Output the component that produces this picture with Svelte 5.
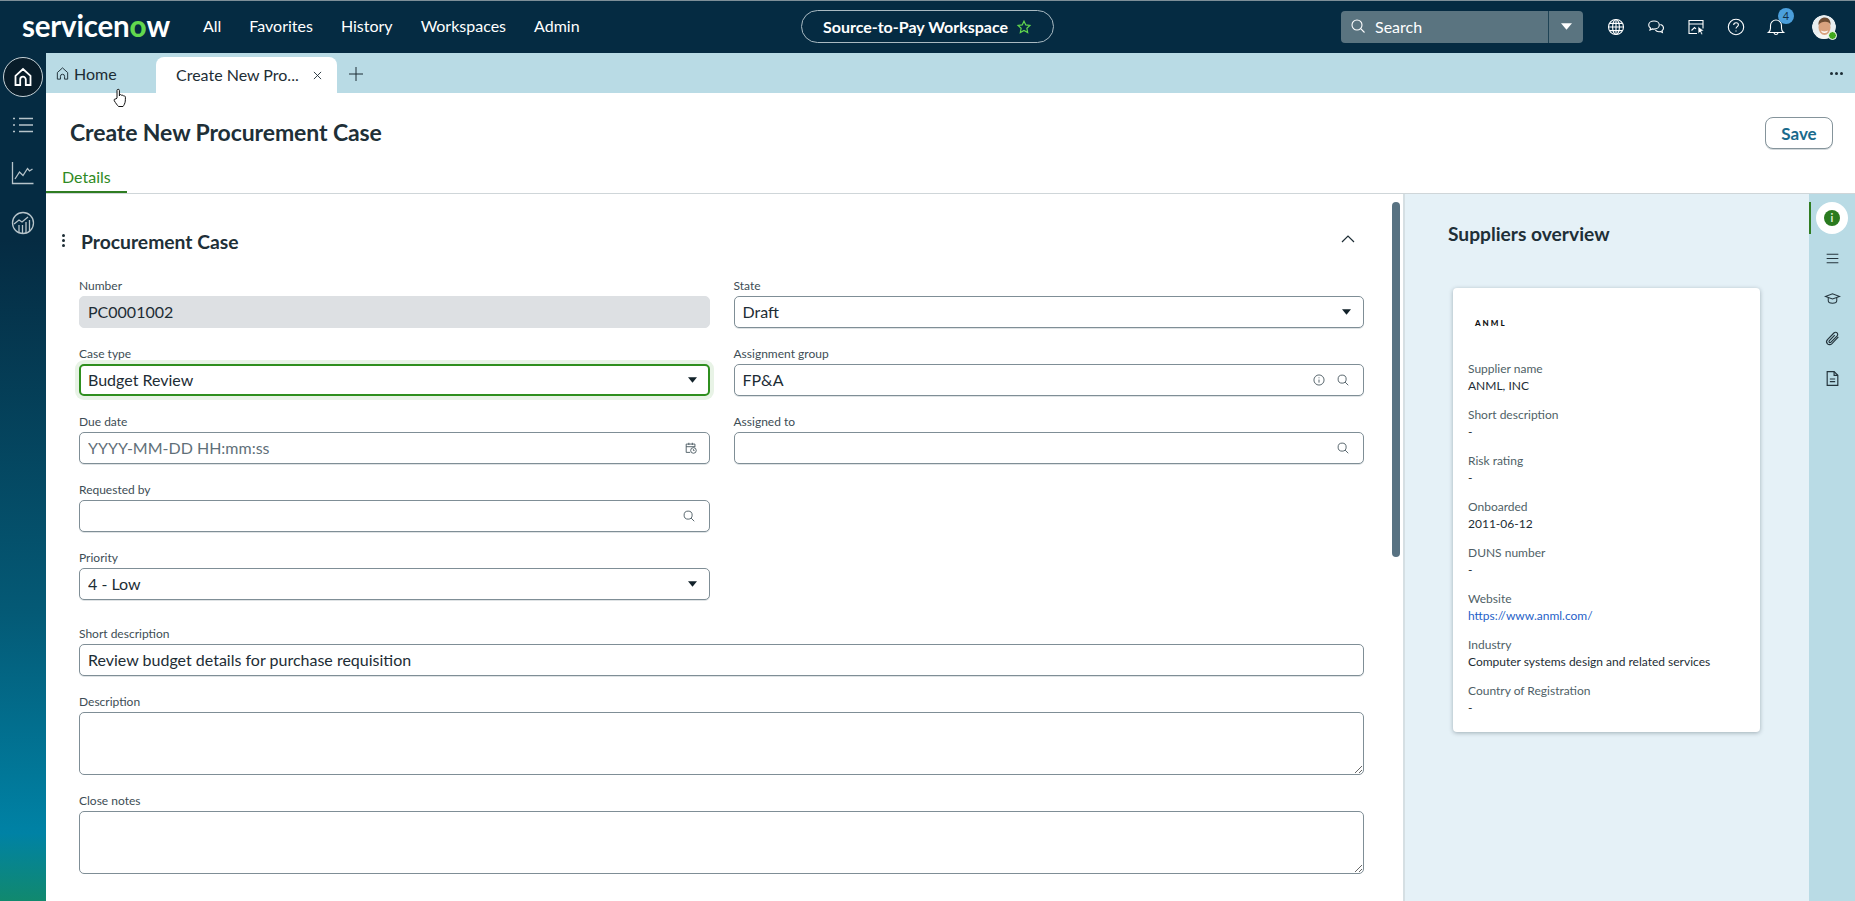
<script>
	const nav = ["All", "Favorites", "History", "Workspaces", "Admin"];
	const supplier = [
		{ label: "Supplier name", value: "ANML, INC" },
		{ label: "Short description", value: "-" },
		{ label: "Risk rating", value: "-" },
		{ label: "Onboarded", value: "2011-06-12" },
		{ label: "DUNS number", value: "-" },
		{ label: "Website", value: "https://www.anml.com/", link: true },
		{ label: "Industry", value: "Computer systems design and related services" },
		{ label: "Country of Registration", value: "-" }
	];
</script>

{#snippet caret()}
	<svg class="caret" viewBox="0 0 10 6"><path d="M0 0h10L5 6z" /></svg>
{/snippet}

{#snippet lens()}
	<svg class="ficon" viewBox="0 0 16 16"><circle cx="7" cy="7" r="4.6" /><path d="M10.4 10.4 14 14" /></svg>
{/snippet}

<div class="app">
	<header class="top">
		<div class="top-left">
			<div class="logo">servicen<span>o</span>w</div>
			<nav class="nav">
				{#each nav as item}
					<span>{item}</span>
				{/each}
			</nav>
		</div>
		<div class="pill">
			Source-to-Pay Workspace
			<svg viewBox="0 0 24 24"><path d="M12 3.2l2.7 5.7 6.2.8-4.6 4.3 1.2 6.2-5.5-3.1-5.5 3.1 1.2-6.2-4.6-4.3 6.2-.8z" /></svg>
		</div>
		<div class="top-right">
			<div class="search">
				<div class="search-field">
					<svg viewBox="0 0 16 16"><circle cx="7" cy="7" r="5" /><path d="M10.7 10.7 14.5 14.5" /></svg>
					Search
				</div>
				<div class="search-drop"><svg viewBox="0 0 10 6"><path d="M0 0h10L5 6z" /></svg></div>
			</div>
			<div class="tools">
				<button aria-label="Language">
					<svg viewBox="0 0 20 20"><circle cx="10" cy="10" r="7.5" /><ellipse cx="10" cy="10" rx="3.4" ry="7.5" /><path d="M2.5 10h15M3.5 6.4h13M3.5 13.6h13M10 2.5v15" /></svg>
				</button>
				<button aria-label="Chat">
					<svg viewBox="0 0 20 20"><path d="M8 4c-3 0-5.300 1.700-5.300 4 0 1.300.7 2.300 1.800 3l-.5 2 2.300-1.100c.5.100 1.100.2 1.700.2 3 0 5.300-1.800 5.300-4.100S11 4 8 4z" /><path d="M14.300 7.500c1.900.5 3.200 1.900 3.200 3.500 0 1.100-.6 2.100-1.500 2.700l.4 1.800-2-1c-1.800.4-4-.1-5-1.300" /></svg>
				</button>
				<button aria-label="Workspace">
					<svg viewBox="0 0 20 20"><path d="M11 16.500H3V3.500h14v8" /><path d="M3 7h14M5.500 13.500l3-3 1.500 1.300" /><path class="solid" d="M12 9.500l6 4.300-2.600.5 1.400 2.800-1.300.7-1.400-2.800-2 1.700z" /></svg>
				</button>
				<button aria-label="Help">
					<svg viewBox="0 0 20 20"><circle cx="10" cy="10" r="7.700" /><path d="M7.700 8c0-1.400 1-2.300 2.400-2.300 1.300 0 2.300.9 2.300 2 0 1.900-2.400 1.900-2.400 3.900" /><path d="M10 13.600v1" /></svg>
				</button>
				<button class="bell" aria-label="Notifications">
					<svg viewBox="0 0 20 20"><path d="M2.500 15.500c1.500-1 2-2 2-4.500V8.500C4.500 5.400 7 3 10 3s5.500 2.400 5.500 5.500V11c0 2.500.5 3.500 2 4.500z" /><path d="M8 15.800c.2 1 1 1.700 2 1.700s1.800-.7 2-1.700" /></svg>
					<span class="badge">4</span>
				</button>
			</div>
			<div class="avatar">
				<svg viewBox="0 0 24 24">
					<circle cx="12" cy="12" r="12" fill="#e9eef0" />
					<path d="M3 24c.5-5 4-6.500 9-6.500s8.500 1.500 9 6.500z" fill="#f4f5f4" />
					<ellipse cx="12.500" cy="12.500" rx="6" ry="7.500" fill="#d9a27f" />
					<path d="M6.500 10c-.5-5 3-7.500 6.500-7.500s6 3 5.500 7.500c-1-2.500-3-3.500-5.800-3.200C10.500 7 8 7.500 6.500 10z" fill="#6d4c33" />
					<path d="M9 15.500c1.700 1.200 5 1.200 7 0-.3 1.700-1.700 2.500-3.500 2.500s-3.200-.8-3.500-2.500z" fill="#fff" />
				</svg>
				<span class="presence"></span>
			</div>
		</div>
	</header>

	<div class="body">
		<aside class="rail">
			<div class="rail-home">
				<svg viewBox="0 0 24 24"><path d="M4.500 20V10.800L12 4l7.500 6.800V20h-4.700v-5.500a2.800 2.800 0 0 0-5.600 0V20z" /></svg>
			</div>
			<div class="rail-icon">
				<svg viewBox="0 0 24 24"><path d="M8 5.500h14M8 12h14M8 18.500h14M2 5.500h2M2 12h2M2 18.500h2" /></svg>
			</div>
			<div class="rail-icon">
				<svg viewBox="0 0 24 24"><path d="M1.500 1v21.500h21" /><path d="M4 18l4.500-7 3.500 3.500 4.500-7 2 2.500 3-2" /></svg>
			</div>
			<div class="rail-icon">
				<svg viewBox="0 0 24 24"><circle cx="12" cy="12" r="10.500" /><path d="M3 13l5-4 3 2 6-5" /><path d="M8 22v-8M11.500 23v-9M15 22.500V11M18.500 20.500V9" /></svg>
			</div>
		</aside>

		<main class="main">
			<div class="tabbar">
				<div class="tab-home">
					<svg viewBox="0 0 16 16"><path d="M2.500 14V7l5.500-5 5.500 5v7h-3.300v-3a2.200 2.200 0 0 0-4.400 0v3z" /></svg>
					Home
				</div>
				<div class="tab-active">
					<span>Create New Pro...</span>
					<svg viewBox="0 0 10 10"><path d="M1 1l8 8M9 1l-8 8" /></svg>
				</div>
				<div class="tab-add">
					<svg viewBox="0 0 14 14"><path d="M7 0v14M0 7h14" /></svg>
				</div>
				<div class="tab-more"><i></i><i></i><i></i></div>
			</div>

			<div class="page-head">
				<div class="title-row">
					<h1>Create New Procurement Case</h1>
					<button class="save">Save</button>
				</div>
				<div class="page-tab">Details</div>
			</div>

			<div class="content">
				<section class="form">
					<div class="section-head">
						<div class="handle"><i></i><i></i><i></i></div>
						<h2>Procurement Case</h2>
						<svg class="chevron" viewBox="0 0 14 8"><path d="M1 7l6-6 6 6" /></svg>
					</div>

					<div class="grid">
						<div class="field">
							<label for="f-number">Number</label>
							<div class="box readonly"><input id="f-number" value="PC0001002" readonly /></div>
						</div>
						<div class="field">
							<label for="f-state">State</label>
							<div class="box"><input id="f-state" value="Draft" readonly />{@render caret()}</div>
						</div>
						<div class="field">
							<label for="f-type">Case type</label>
							<div class="box focused"><input id="f-type" value="Budget Review" readonly />{@render caret()}</div>
						</div>
						<div class="field">
							<label for="f-group">Assignment group</label>
							<div class="box">
								<input id="f-group" value="FP&A" readonly />
								<svg class="ficon info" viewBox="0 0 16 16"><circle cx="8" cy="8" r="5.800" /><path d="M8 7.500V11M8 5v1" /></svg>
								{@render lens()}
							</div>
						</div>
						<div class="field">
							<label for="f-due">Due date</label>
							<div class="box">
								<input id="f-due" placeholder="YYYY-MM-DD HH:mm:ss" readonly />
								<svg class="ficon cal" viewBox="0 0 16 16"><path d="M7 13H2.500V3.500h10V7M2.500 6.500h10M5.500 2v2.500M9.500 2v2.500" /><circle cx="10.800" cy="10.800" r="3.200" /><path d="M10.800 9.300v1.600h1.200" /></svg>
							</div>
						</div>
						<div class="field">
							<label for="f-assigned">Assigned to</label>
							<div class="box"><input id="f-assigned" readonly />{@render lens()}</div>
						</div>
						<div class="field">
							<label for="f-req">Requested by</label>
							<div class="box"><input id="f-req" readonly />{@render lens()}</div>
						</div>
						<div class="spacer"></div>
						<div class="field">
							<label for="f-prio">Priority</label>
							<div class="box"><input id="f-prio" value="4 - Low" readonly />{@render caret()}</div>
						</div>
					</div>

					<div class="wide">
						<div class="field">
							<label for="f-short">Short description</label>
							<div class="box"><input id="f-short" value="Review budget details for purchase requisition" readonly /></div>
						</div>
						<div class="field">
							<label for="f-desc">Description</label>
							<textarea id="f-desc" readonly></textarea>
						</div>
						<div class="field">
							<label for="f-close">Close notes</label>
							<textarea id="f-close" readonly></textarea>
						</div>
					</div>
					<div class="scroll-thumb"></div>
				</section>

				<section class="panel">
					<h3>Suppliers overview</h3>
					<div class="card">
						<div class="card-logo">ANML</div>
						{#each supplier as row}
							<div class="row">
								<div class="row-label">{row.label}</div>
								{#if row.link}
									<a href="https://www.anml.com/">{row.value}</a>
								{:else}
									<div class="row-value">{row.value}</div>
								{/if}
							</div>
						{/each}
					</div>
				</section>

				<aside class="side">
					<div class="side-item active">
						<span class="side-circle"><span class="info-dot">i</span></span>
					</div>
					<div class="side-item">
						<svg viewBox="0 0 16 16"><path d="M2.500 4h11M2.500 8h11M2.500 12h11" /></svg>
					</div>
					<div class="side-item">
						<svg viewBox="0 0 18 16"><path d="M1.500 5.800 9 3l7.500 2.800L9 8.600z" /><path d="M4.500 7v3.500c0 1.500 2 2.500 4.500 2.500s4.500-1 4.500-2.500V7" /></svg>
					</div>
					<div class="side-item">
						<svg viewBox="0 0 16 16"><path d="M13.500 6.500l-6 6.300c-1.300 1.300-3.100 1.300-4.200.2s-1.100-2.900.2-4.200l5.800-6c.9-.9 2.200-.9 3-.1s.8 2.100-.1 3l-5.600 5.800c-.5.500-1.200.5-1.600.1s-.4-1.100.1-1.600l5-5.200" /></svg>
					</div>
					<div class="side-item">
						<svg viewBox="0 0 16 16"><path d="M3 1.500h6.500L13 5v9.500H3z" /><path d="M9.500 1.500V5H13M5.500 8.500h5M5.500 11h5" /></svg>
					</div>
				</aside>
			</div>
		</main>
	</div>

	<svg class="hand" viewBox="0 0 16 20"><path d="M5 10V2.500a1.200 1.200 0 0 1 2.400 0V8l.3-1.200c.8-.5 1.800-.2 2 .6.800-.4 1.600-.1 1.900.6.900-.3 1.800.2 1.800 1.200 0 3 0 5-1 7-.5 1-1 1.800-1.400 2.300H6.500C5.500 17.500 3.600 15 2.300 12.800c-.7-1.200.7-2.500 1.700-1.700z" /></svg>
</div>

<style>
	:global(body) {
		margin: 0;
	}
	.app {
		position: relative;
		width: 100%;
		height: 100vh;
		overflow: hidden;
		display: flex;
		flex-direction: column;
		font-family: Lato, "Open Sans", sans-serif;
		color: #1d2d35;
		background: #fff;
	}
	h1, h2, h3 {
		margin: 0;
	}
	svg {
		display: block;
		flex: none;
		fill: none;
		stroke: currentColor;
	}
	button {
		font-family: inherit;
	}

	/* top bar */
	.top {
		box-sizing: border-box;
		height: 53px;
		flex: none;
		display: grid;
		grid-template-columns: 1fr auto 1fr;
		align-items: center;
		background: #052b42;
		border-top: 1px solid #7e8f98;
		color: #fff;
	}
	.top-left {
		display: flex;
		align-items: center;
		padding-left: 22px;
	}
	.logo {
		width: 148px;
		font-size: 29.500px;
		font-weight: 700;
		letter-spacing: -0.2px;
		line-height: 34px;
		margin-top: -3px;
		white-space: nowrap;
	}
	.logo span {
		color: #62d84e;
		font-weight: 900;
	}
	.nav {
		display: flex;
		gap: 28px;
		margin: -3px 0 0 33px;
		font-size: 16px;
	}
	.pill {
		box-sizing: border-box;
		width: 253px;
		height: 33px;
		display: flex;
		align-items: center;
		justify-content: center;
		gap: 8px;
		border: 1px solid #a9bac2;
		border-radius: 17px;
		font-size: 16px;
		font-weight: 700;
		margin-top: -1px;
	}
	.pill svg {
		width: 16px;
		height: 16px;
		stroke: #62d84e;
		stroke-width: 1.800;
	}
	.top-right {
		display: flex;
		align-items: center;
		justify-content: flex-end;
		padding-right: 19px;
	}
	.search {
		display: flex;
		width: 242px;
		height: 32px;
		border-radius: 4px;
		overflow: hidden;
		background: #5a7480;
		margin-top: -1px;
	}
	.search-field {
		flex: 1;
		display: flex;
		align-items: center;
		gap: 9px;
		padding-left: 9px;
		padding-bottom: 1px;
		font-size: 16px;
		border-right: 1px solid #1e4355;
	}
	.search-field svg {
		width: 16px;
		height: 16px;
		stroke-width: 1.100;
	}
	.search-drop {
		width: 34px;
		display: flex;
		align-items: center;
		justify-content: center;
	}
	.search-drop svg {
		width: 11px;
		height: 7px;
		fill: #fff;
		stroke: none;
	}
	.tools {
		display: flex;
		margin-left: 13px;
	}
	.tools button {
		position: relative;
		width: 40px;
		height: 40px;
		padding: 0;
		display: flex;
		align-items: center;
		justify-content: center;
		background: none;
		border: 0;
		color: #fff;
	}
	.tools svg {
		width: 20px;
		height: 20px;
		stroke-width: 1.100;
	}
	.tools .solid {
		fill: #fff;
		stroke: #052b42;
		stroke-width: 0.600;
	}
	.badge {
		position: absolute;
		top: 1px;
		left: 22px;
		width: 16px;
		height: 16px;
		border-radius: 50%;
		background: #4b9fdc;
		color: #123047;
		font-size: 11px;
		line-height: 16px;
		text-align: center;
	}
	.avatar {
		position: relative;
		width: 24px;
		height: 24px;
		margin-left: 16px;
	}
	.avatar svg {
		width: 24px;
		height: 24px;
		border-radius: 50%;
		stroke: none;
	}
	.presence {
		position: absolute;
		right: -1px;
		bottom: -1px;
		width: 7px;
		height: 7px;
		border: 1px solid #fff;
		border-radius: 50%;
		background: #41a81d;
	}

	/* left rail */
	.body {
		flex: 1;
		min-height: 0;
		display: flex;
	}
	.rail {
		box-sizing: border-box;
		width: 46px;
		flex: none;
		display: flex;
		flex-direction: column;
		align-items: center;
		padding-top: 4px;
		color: #b7c4ca;
		background: linear-gradient(180deg, #052b42 0%, #052b42 22%, #045a76 66%, #0082a5 92%, #11896e 100%);
	}
	.rail-home {
		box-sizing: border-box;
		width: 40px;
		height: 40px;
		display: flex;
		align-items: center;
		justify-content: center;
		border: 1px solid #c6d2d7;
		border-radius: 50%;
		background: #081c29;
		color: #fff;
		margin-bottom: 16px;
	}
	.rail-home svg {
		width: 24px;
		height: 24px;
		stroke-width: 1.800;
	}
	.rail-icon {
		height: 24px;
		margin-bottom: 24px;
	}
	.rail-icon:last-child {
		margin-top: 2px;
	}
	.rail-icon svg {
		width: 24px;
		height: 24px;
		stroke-width: 1.300;
	}

	/* tabs */
	.main {
		flex: 1;
		min-width: 0;
		display: flex;
		flex-direction: column;
	}
	.tabbar {
		height: 40px;
		flex: none;
		display: flex;
		align-items: flex-end;
		background: #b9dbe5;
		font-size: 16px;
	}
	.tab-home {
		box-sizing: border-box;
		width: 110px;
		height: 40px;
		display: flex;
		align-items: center;
		gap: 4px;
		padding-left: 9px;
	}
	.tab-home svg {
		width: 15px;
		height: 15px;
		stroke-width: 1;
	}
	.tab-active {
		box-sizing: border-box;
		width: 181px;
		height: 36px;
		display: flex;
		align-items: center;
		justify-content: space-between;
		padding: 0 15px 2px 20px;
		background: #fff;
		border-radius: 8px 8px 0 0;
	}
	.tab-active svg {
		width: 9px;
		height: 9px;
		stroke-width: 1;
		margin-top: 2px;
	}
	.tab-add {
		height: 40px;
		display: flex;
		align-items: center;
		margin-left: 12px;
		padding-top: 1px;
		box-sizing: border-box;
	}
	.tab-add svg {
		width: 14px;
		height: 14px;
		stroke-width: 1;
	}
	.tab-more {
		height: 40px;
		display: flex;
		align-items: center;
		gap: 2px;
		margin-left: auto;
		padding-right: 12px;
	}
	.tab-more i {
		width: 3px;
		height: 3px;
		border-radius: 50%;
		background: #1d2d35;
	}

	/* page head */
	.page-head {
		box-sizing: border-box;
		height: 101px;
		flex: none;
		padding-top: 24px;
		border-bottom: 1px solid #cfd6d9;
	}
	.title-row {
		display: flex;
		align-items: center;
		justify-content: space-between;
		height: 32px;
		padding: 0 22px 0 24px;
	}
	h1 {
		font-size: 23px;
		font-weight: 700;
		letter-spacing: -0.1px;
		color: #202f37;
		margin-top: -2px;
	}
	.save {
		box-sizing: border-box;
		width: 68px;
		height: 32px;
		padding: 0;
		background: #fff;
		border: 1px solid #85949b;
		border-radius: 8px;
		box-shadow: 0 1px 0 #d3d9dc;
		color: #1a6a8c;
		font-size: 17px;
		font-weight: 700;
	}
	.page-tab {
		box-sizing: border-box;
		width: 81px;
		height: 33px;
		margin-top: 11px;
		padding-left: 16px;
		color: #2f8a24;
		font-size: 16px;
		line-height: 33px;
		border-bottom: 2px solid #2f7d22;
	}

	/* form */
	.content {
		flex: 1;
		min-height: 0;
		display: flex;
	}
	.form {
		position: relative;
		box-sizing: border-box;
		flex: 1;
		min-width: 0;
		padding: 33px 39px 0 33px;
	}
	.section-head {
		display: flex;
		align-items: center;
		height: 28px;
		margin: 0 0 23px -19px;
	}
	.handle {
		width: 21px;
		display: flex;
		flex-direction: column;
		gap: 2px;
		padding-left: 2px;
		box-sizing: border-box;
		margin-top: -1px;
	}
	.handle i {
		width: 3px;
		height: 3px;
		border-radius: 50%;
		background: #1d2d35;
	}
	h2 {
		font-size: 19.300px;
		font-weight: 700;
		color: #202f37;
	}
	.chevron {
		width: 14px;
		height: 8px;
		margin: -4px 9px 0 auto;
		stroke-width: 1.200;
	}
	.grid {
		display: grid;
		grid-template-columns: 1fr 1fr;
		column-gap: 24px;
		row-gap: 18px;
	}
	.field {
		display: flex;
		flex-direction: column;
		gap: 2px;
	}
	.field label {
		height: 16px;
		font-size: 12px;
		line-height: 16px;
		color: #3d4d55;
	}
	.box {
		box-sizing: border-box;
		height: 32px;
		display: flex;
		align-items: center;
		gap: 12px;
		padding: 0 11px 0 8px;
		border: 1px solid #7f8e96;
		border-radius: 5px;
		box-shadow: 0 1px 0 #dfe3e5;
		background: #fff;
	}
	.box input {
		flex: 1;
		min-width: 0;
		padding: 0;
		margin-top: -2px;
		border: 0;
		outline: 0;
		background: none;
		font: 16px Lato, "Open Sans", sans-serif;
		color: #1d2d35;
	}
	.box input::placeholder {
		color: #5f7079;
		opacity: 1;
	}
	.box.readonly {
		border-color: #dde0e3;
		background: #dde0e3;
		box-shadow: none;
	}
	.box.focused {
		border: 2px solid #2f8f1f;
		padding: 0 10px 0 7px;
		box-shadow: 0 0 0 4px #e8f3e6;
	}
	.caret {
		width: 9px;
		height: 6px;
		margin-right: 1px;
		fill: #12222a;
		stroke: none;
	}
	.ficon {
		width: 14px;
		height: 14px;
		stroke: #44545c;
		stroke-width: 1;
		margin-right: 2px;
	}
	.ficon.info {
		margin-right: -2px;
	}
	.ficon.cal {
		margin-right: 0;
	}
	.wide {
		display: flex;
		flex-direction: column;
		gap: 18px;
		margin-top: 26px;
	}
	textarea {
		box-sizing: border-box;
		display: block;
		width: 100%;
		height: 63px;
		padding: 6px 8px;
		border: 1px solid #7f8e96;
		border-radius: 5px;
		outline: 0;
		resize: vertical;
		background: #fff;
	}
	.scroll-thumb {
		position: absolute;
		top: 8px;
		right: 3px;
		width: 8px;
		height: 355px;
		border-radius: 4px;
		background: #587282;
	}

	/* suppliers panel */
	.panel {
		box-sizing: border-box;
		width: 406px;
		flex: none;
		padding: 28px 0 0 43px;
		border-left: 2px solid #d5dfe3;
		background: #e5f1f7;
	}
	h3 {
		font-size: 19.200px;
		line-height: 24px;
		font-weight: 700;
		color: #202f37;
	}
	.card {
		box-sizing: border-box;
		width: 307px;
		margin: 42px 0 0 5px;
		padding: 27px 15px 15px;
		background: #fff;
		border-radius: 4px;
		box-shadow: 0 1px 4px rgba(30, 50, 60, 0.35);
	}
	.card-logo {
		height: 16px;
		margin: 0 0 30px 7px;
		font-size: 8px;
		line-height: 16px;
		font-weight: 900;
		letter-spacing: 2px;
		color: #111;
	}
	.row {
		margin-bottom: 12px;
		font-size: 12px;
	}
	.row:last-child {
		margin-bottom: 0;
	}
	.row-label {
		height: 16px;
		line-height: 16px;
		color: #4f5f67;
	}
	.row-value,
	.row a {
		display: block;
		height: 18px;
		line-height: 18px;
		color: #1d2d35;
	}
	.row a {
		color: #1f5fc8;
		text-decoration: none;
	}

	/* right rail */
	.side {
		position: relative;
		box-sizing: border-box;
		width: 46px;
		flex: none;
		display: flex;
		flex-direction: column;
		gap: 8px;
		padding-top: 8px;
		background: #b9dbe5;
	}
	.side-item {
		position: relative;
		height: 32px;
		display: flex;
		align-items: center;
		justify-content: center;
		color: #24343c;
	}
	.side-item svg {
		width: 17px;
		height: 17px;
		stroke-width: 1.100;
	}
	.side-item.active::before {
		content: "";
		position: absolute;
		left: 0;
		top: 0;
		width: 2px;
		height: 32px;
		background: #2f7d22;
	}
	.side-circle {
		width: 32px;
		height: 32px;
		display: flex;
		align-items: center;
		justify-content: center;
		border-radius: 50%;
		background: #fff;
	}
	.info-dot {
		width: 16px;
		height: 16px;
		border-radius: 50%;
		background: #2a7a1f;
		color: #dff0d8;
		font-size: 11px;
		font-weight: 700;
		line-height: 16px;
		text-align: center;
	}

	/* mouse pointer */
	.hand {
		position: absolute;
		left: 112px;
		top: 88px;
		width: 16px;
		height: 20px;
		fill: #fff;
		stroke: #111;
		stroke-width: 1;
	}
</style>
